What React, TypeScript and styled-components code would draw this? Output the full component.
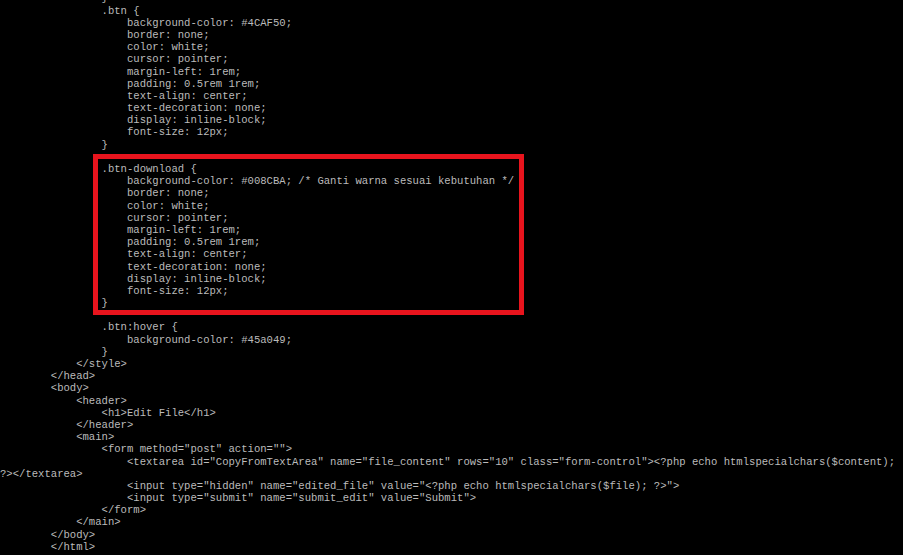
import React from "react";
import styled, { createGlobalStyle } from "styled-components";

const GlobalStyle = createGlobalStyle`
  html, body {
    margin: 0;
    padding: 0;
    background: #000;
    overflow: hidden;
  }
  body {
    width: 903px;
    height: 555px;
  }
`;

const Terminal = styled.div`
  width: 903px;
  height: 555px;
  background: #000;
  overflow: hidden;
`;

const Code = styled.div`
  margin-top: -7.6px;
  font-family: "Liberation Mono", "Courier New", monospace;
  font-size: 10.58px;
  line-height: 12.19px;
  color: #bbbbbb;
`;

const Line = styled.div`
  white-space: pre;
  height: 12.19px;
`;

const Marked = styled.div`
  position: relative;
  &::after {
    content: "";
    position: absolute;
    left: 93px;
    width: 421px;
    top: -9px;
    bottom: -6px;
    border: 5px solid #e8141d;
    pointer-events: none;
  }
`;

const before: string[] = [
  "                }",
  "                .btn {",
  "                    background-color: #4CAF50;",
  "                    border: none;",
  "                    color: white;",
  "                    cursor: pointer;",
  "                    margin-left: 1rem;",
  "                    padding: 0.5rem 1rem;",
  "                    text-align: center;",
  "                    text-decoration: none;",
  "                    display: inline-block;",
  "                    font-size: 12px;",
  "                }",
  "",
];

const marked: string[] = [
  "                .btn-download {",
  "                    background-color: #008CBA; /* Ganti warna sesuai kebutuhan */",
  "                    border: none;",
  "                    color: white;",
  "                    cursor: pointer;",
  "                    margin-left: 1rem;",
  "                    padding: 0.5rem 1rem;",
  "                    text-align: center;",
  "                    text-decoration: none;",
  "                    display: inline-block;",
  "                    font-size: 12px;",
  "                }",
];

const after: string[] = [
  "",
  "                .btn:hover {",
  "                    background-color: #45a049;",
  "                }",
  "            </style>",
  "        </head>",
  "        <body>",
  "            <header>",
  "                <h1>Edit File</h1>",
  "            </header>",
  "            <main>",
  "                <form method=\"post\" action=\"\">",
  "                    <textarea id=\"CopyFromTextArea\" name=\"file_content\" rows=\"10\" class=\"form-control\"><?php echo htmlspecialchars($content); ",
  "?></textarea>",
  "                    <input type=\"hidden\" name=\"edited_file\" value=\"<?php echo htmlspecialchars($file); ?>\">",
  "                    <input type=\"submit\" name=\"submit_edit\" value=\"Submit\">",
  "                </form>",
  "            </main>",
  "        </body>",
  "        </html>",
];

export default function App() {
  return (
    <>
      <GlobalStyle />
      <Terminal>
        <Code>
          {before.map((l, i) => (
            <Line key={`b${i}`}>{l}</Line>
          ))}
          <Marked>
            {marked.map((l, i) => (
              <Line key={`m${i}`}>{l}</Line>
            ))}
          </Marked>
          {after.map((l, i) => (
            <Line key={`a${i}`}>{l}</Line>
          ))}
        </Code>
      </Terminal>
    </>
  );
}
